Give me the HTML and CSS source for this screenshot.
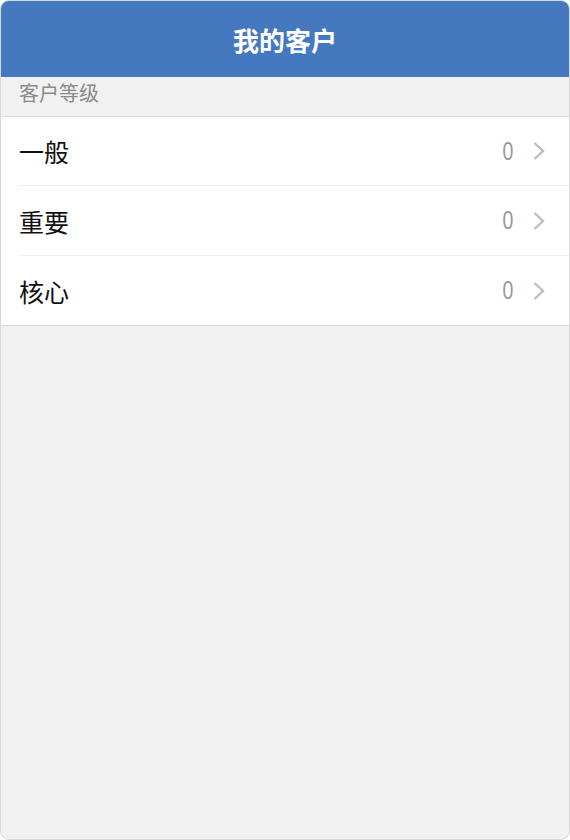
FILE: index.html
```html
<!DOCTYPE html>
<html lang="zh-CN">
<head>
    <meta charset="UTF-8">
    <meta name="viewport" content="width=device-width, initial-scale=1.0">
    <title>我的客户</title>
    <link rel="stylesheet" href="styles.css">
</head>
<body>
    <div class="frame">
        <header class="topbar">
            <h1>我的客户</h1>
        </header>

        <div class="section-title">客户等级</div>

        <ul class="list">
            <li class="row">
                <span class="label">一般</span>
                <span class="count">0</span>
                <svg class="chevron" width="12" height="18" viewBox="0 0 12 18"><path d="M1.5 1 L10 9 L1.5 17" fill="none" stroke="#bdbdc1" stroke-width="2.4"/></svg>
            </li>
            <li class="row">
                <span class="label">重要</span>
                <span class="count">0</span>
                <svg class="chevron" width="12" height="18" viewBox="0 0 12 18"><path d="M1.5 1 L10 9 L1.5 17" fill="none" stroke="#bdbdc1" stroke-width="2.4"/></svg>
            </li>
            <li class="row">
                <span class="label">核心</span>
                <span class="count">0</span>
                <svg class="chevron" width="12" height="18" viewBox="0 0 12 18"><path d="M1.5 1 L10 9 L1.5 17" fill="none" stroke="#bdbdc1" stroke-width="2.4"/></svg>
            </li>
        </ul>
    </div>
</body>
</html>
```

FILE: styles.css
```css
body {
    margin: 0;
    font-family: "Liberation Sans", "Noto Sans CJK SC", sans-serif;
}
.frame {
    box-sizing: border-box;
    height: 840px;
    border: 1px solid #d9d9d9;
    border-radius: 9px;
    overflow: hidden;
    background-color: #f1f1f1;
}
.topbar {
    height: 76px;
    background-color: #4479c0;
    display: flex;
    align-items: center;
    justify-content: center;
}
.topbar h1 {
    margin: 0;
    color: white;
    font-size: 26px;
    font-weight: bold;
}
.section-title {
    height: 39px;
    padding-left: 18px;
    padding-top: 1px;
    box-sizing: border-box;
    color: #8a8a8a;
    font-size: 20px;
}
.list {
    list-style: none;
    margin: 0;
    padding: 0 0 0 18px;
    background-color: white;
    border-top: 1px solid #dcdcdc;
    border-bottom: 1px solid #dcdcdc;
}
.row {
    display: flex;
    align-items: center;
    height: 69px;
    padding-right: 24px;
    border-top: 1px solid #efefef;
}
.row:first-child {
    border-top: none;
    height: 68px;
}
.label {
    flex: 1;
    font-size: 25px;
    color: #111;
}
.count {
    font-size: 25px;
    color: #999;
    margin-right: 18px;
    transform: scaleX(0.78);
}
```
